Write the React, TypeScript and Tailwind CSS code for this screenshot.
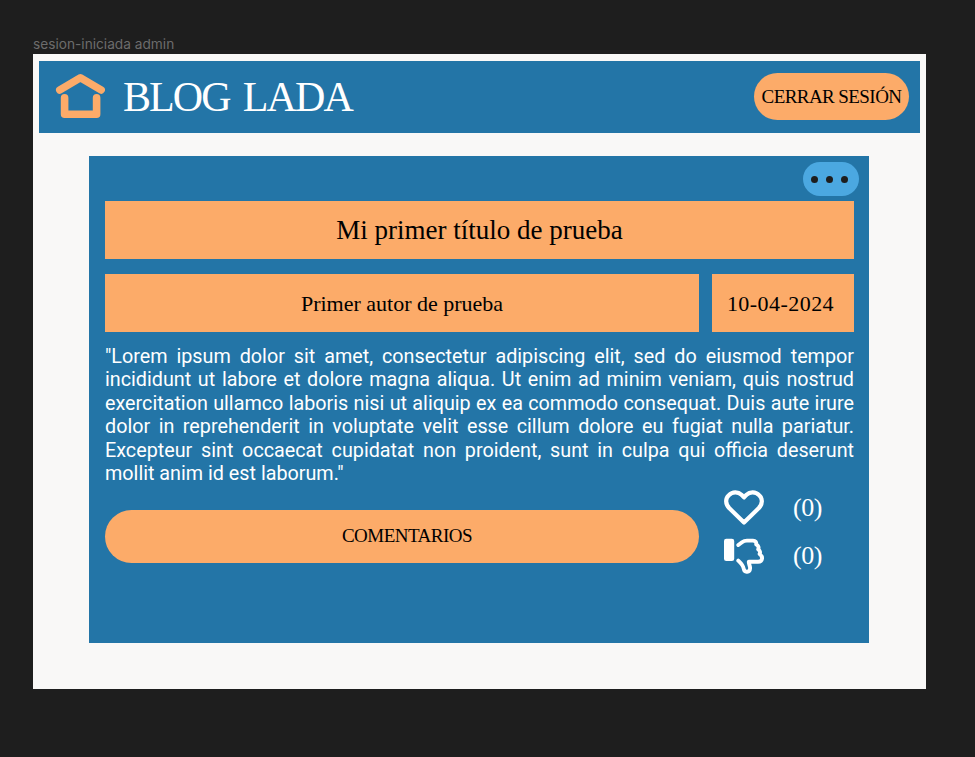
import type { ReactNode } from "react";

const serif = "font-['Liberation_Serif',serif]";

function HomeIcon() {
  return (
    <svg className="h-[47px] w-[50px] shrink-0" viewBox="0 0 50 47" fill="none" stroke="#fcab69" strokeLinecap="round" strokeLinejoin="round">
      <path d="M4.700 17 25.400 4.800 46.200 17" strokeWidth="7.4" />
      <path d="M9.600 24.800V41.300H41.600V24.800" strokeWidth="7.6" />
    </svg>
  );
}

function HeartIcon() {
  return (
    <svg className="h-[36px] w-[40px] shrink-0" viewBox="0 0 40 36" fill="none" stroke="#fff" strokeWidth="4.2" strokeLinejoin="round">
      <path d="M20 32.600 5.400 18.300C1.200 14 1.200 8.500 4.800 5.200 8.500 1.500 14 1.500 17.500 4.800L20 7.400 22.500 4.800C26 1.500 31.500 1.500 35.200 5.200 38.800 8.500 38.800 14 34.600 18.300Z" />
    </svg>
  );
}

function DislikeIcon() {
  return (
    <svg className="h-[36px] w-[40px] shrink-0" viewBox="0 0 40 36" fill="none" stroke="#fff" strokeWidth="3.9" strokeLinecap="round" strokeLinejoin="round">
      <rect x="0" y="0.700" width="10.200" height="22.300" rx="2.300" fill="#fff" stroke="none" />
      <path d="M14.300 7 18 4.200C19.500 3.100 21 2.600 23 2.600H29C31.500 2.600 32.600 4.300 32.200 6.500 34.500 7.500 35 9.500 34.200 11.300 36 12.500 36.500 14.500 35.600 16 37.500 17.500 38.300 19 38 20.800 37.700 23 36 23.800 34 23.800H24.800C24.600 26 26.300 28 26.100 30.300 25.800 34.500 20.500 35 19.800 31 19.200 27.500 17.500 25.500 14.300 22.600" />
    </svg>
  );
}

function Field({ className, children }: { className: string; children: ReactNode }) {
  return <div className={`flex h-[58px] items-center justify-center bg-[#fcab69] text-black ${className}`}>{children}</div>;
}

function Reaction({ icon }: { icon: ReactNode }) {
  return (
    <div className="flex h-[36px] items-center gap-[29px]">
      {icon}
      <span className="text-[26px] leading-none tracking-[-0.5px]">(0)</span>
    </div>
  );
}

export default function App() {
  return (
    <div className={`h-[757px] w-[975px] overflow-hidden bg-[#1e1e1e] pl-[33px] ${serif}`}>
      <div className="flex h-[54px] items-end pb-[2px] font-['Inter',sans-serif] text-[13.7px] leading-[16px] text-[#6c6c6c]">
        <span>sesion-iniciada admin</span>
      </div>
      <main className="h-[634.5px] w-[892.5px] bg-[#f9f8f7] px-[6px] pt-[7px]">
        <header className="flex h-[71.5px] w-[880.5px] items-center bg-[#2375a7] pr-[10.5px] pl-[16px]">
          <HomeIcon />
          <h1 className="ml-[18px] text-[42px] leading-none tracking-[-1.9px] [word-spacing:4.5px] whitespace-nowrap text-white">
            BLOG LADA
          </h1>
          <button className="ml-auto h-[47px] w-[155px] rounded-full bg-[#fcab69] text-[19px] tracking-[-0.57px] whitespace-nowrap text-black">
            CERRAR SESIÓN
          </button>
        </header>

        <article className="mt-[23.5px] ml-[50px] h-[487px] w-[780px] bg-[#2375a7] pt-[6px] pr-[15px] pl-[16px] text-white">
          <div className="-mr-[5px] flex h-[39px] justify-end">
            <button className="flex h-[34px] w-[56px] items-center justify-center gap-[8px] rounded-full bg-[#4ba8e1] pt-px pr-[3px]">
              <span className="size-[7px] rounded-full bg-[#1e1e1e]" />
              <span className="size-[7px] rounded-full bg-[#1e1e1e]" />
              <span className="size-[7px] rounded-full bg-[#1e1e1e]" />
            </button>
          </div>
          <Field className="text-[27px]">Mi primer título de prueba</Field>
          <div className="mt-[15px] flex justify-between">
            <Field className="w-[594px] text-[22px]">Primer autor de prueba</Field>
            <Field className="w-[142px] pr-[5px] text-[22px] tracking-[0.45px]">10-04-2024</Field>
          </div>
          <p className="mt-[12.5px] w-[749px] text-justify font-['Roboto',sans-serif] text-[19.75px] leading-[23.5px]">
            "Lorem ipsum dolor sit amet, consectetur adipiscing elit, sed do eiusmod tempor incididunt ut labore et dolore magna aliqua. Ut enim ad minim veniam, quis nostrud exercitation ullamco laboris nisi ut aliquip ex ea commodo consequat. Duis aute irure dolor in reprehenderit in voluptate velit esse cillum dolore eu fugiat nulla pariatur. Excepteur sint occaecat cupidatat non proident, sunt in culpa qui officia deserunt mollit anim id est laborum."
          </p>
          <div className="mt-[4.500px] flex">
            <button className="mt-[20px] h-[53px] w-[594px] rounded-full bg-[#fcab69] pl-[10px] text-[19px] tracking-[-0.5px] text-black">
              COMENTARIOS
            </button>
            <div className="ml-[25px] flex flex-col gap-[12px]">
              <Reaction icon={<HeartIcon />} />
              <Reaction icon={<DislikeIcon />} />
            </div>
          </div>
        </article>
      </main>
    </div>
  );
}
